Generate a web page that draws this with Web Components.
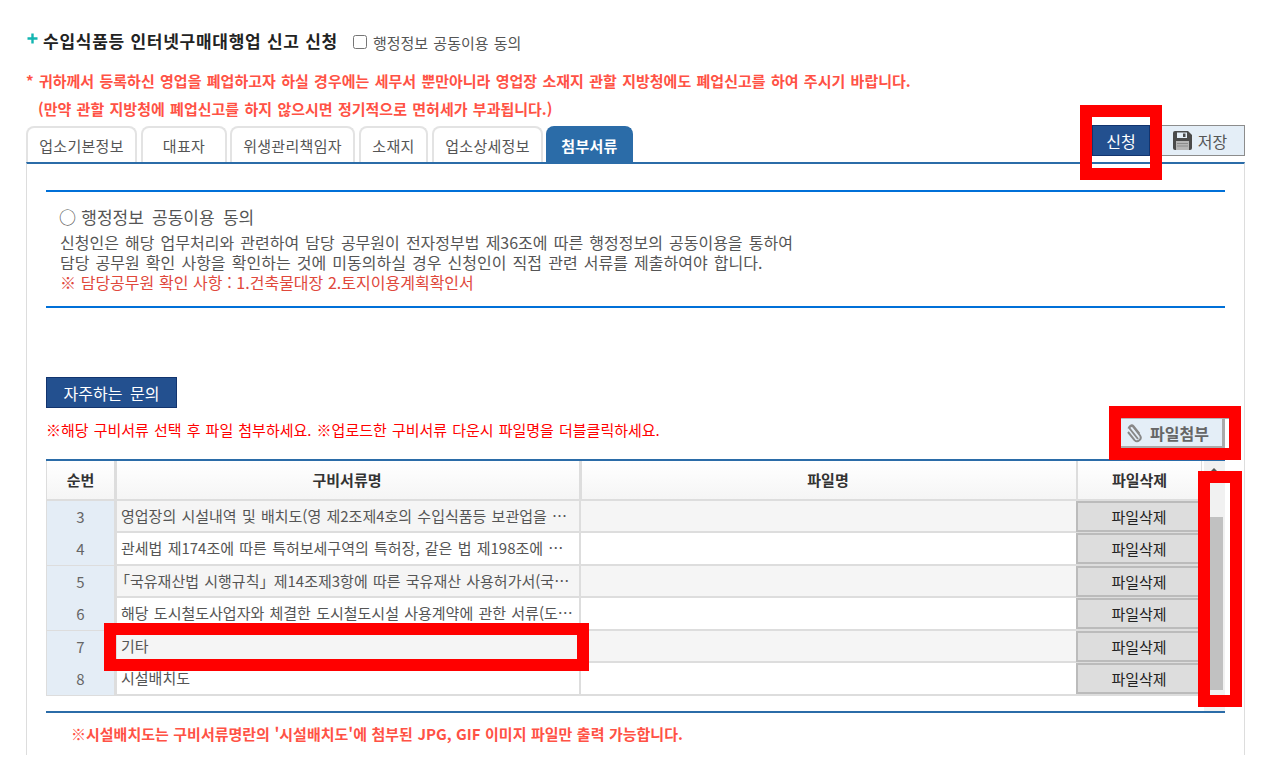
<!DOCTYPE html>
<html lang="ko"><head><meta charset="utf-8"><title>수입식품등 인터넷구매대행업 신고 신청</title>
<style>
html,body{margin:0;padding:0;height:757px;overflow:hidden;background:#fff}
body{font:15px "Noto Sans CJK KR","Noto Sans",sans-serif;color:#555}
</style></head><body>
<app-page>
  <page-header slot="head">수입식품등 인터넷구매대행업 신고 신청</page-header>
  <warn-line>* 귀하께서 등록하신 영업을 폐업하고자 하실 경우에는 세무서 뿐만아니라 영업장 소재지 관할 지방청에도 폐업신고를 하여 주시기 바랍니다.</warn-line>
  <warn-line second>(만약 관할 지방청에 폐업신고를 하지 않으시면 정기적으로 면허세가 부과됩니다.)</warn-line>
  <tab-bar></tab-bar>
  <doc-panel></doc-panel>
  <red-box style="left:1080px;top:105px;width:82px;height:75px"></red-box>
  <red-box style="left:1109px;top:406px;width:132px;height:54px"></red-box>
  <red-box style="left:1198px;top:471px;width:44px;height:236px"></red-box>
  <red-box style="left:104px;top:623px;width:485px;height:48px"></red-box>
</app-page>
<script>
function def(name, css, html, init){
  customElements.define(name, class extends HTMLElement{
    constructor(){super();const s=this.attachShadow({mode:'open'});s.innerHTML='<style>'+css+'</style>'+html;if(init)init(s,this);}
  });
}
const FONT='"Noto Sans CJK KR","Noto Sans",sans-serif';
def('app-page',`:host{display:block;position:relative;width:1272px;height:757px;overflow:hidden;box-sizing:border-box;padding:0 27px 0 26px;font-family:${FONT}}`,
 `<slot name="head"></slot><slot></slot>`);
def('page-header',`:host{display:flex;align-items:center;height:28px;margin-top:27px;margin-bottom:12px}
 .plus{width:11px;height:11px;margin-top:-5px;margin-left:1px;margin-right:5px;flex:none}
 .t{font-size:17px;font-weight:700;color:#222;line-height:28px;letter-spacing:.74px;margin-top:-1px}
 label{display:flex;align-items:center;margin-left:15px;font-size:15px;color:#555;margin-top:2px;word-spacing:1px}
 .cb{appearance:none;box-sizing:border-box;width:14px;height:14px;margin:0 6px 0 0;border:1.5px solid #767676;border-radius:2.5px;background:#fff}`,
 `<svg class="plus" viewBox="0 0 11 11"><path d="M5.5 .5v10M.5 5.5h10" stroke="#13b5b1" stroke-width="2.4" fill="none"/></svg><span class="t"><slot></slot></span><label><input class="cb" type="checkbox">행정정보 공동이용 동의</label>`);
def('warn-line',`:host{display:block;height:28px;line-height:28px;font-size:15px;font-weight:700;color:#ff5245;white-space:nowrap;word-spacing:1.15px}
 :host([second]){padding-left:12px;height:31px}`,`<slot></slot>`);
def('tab-item',`:host{display:flex;align-items:center;justify-content:center;box-sizing:border-box;height:36px;border:2px solid #e3e3e3;border-bottom:0;border-radius:8px 8px 0 0;background:#fff;font-size:15px;letter-spacing:.3px;color:#555;padding-top:1px}
 :host([active]){background:#2b6ca8;border-color:#2b6ca8;color:#fff;font-weight:700}`,`<slot></slot>`);
def('save-btn',`:host{display:flex;align-items:center;justify-content:center;box-sizing:border-box;height:31px;width:84px;border:1px solid #8c8c8c;background:#e4eef7;color:#555;font-size:16px;padding-right:6px}
 svg{width:19px;height:19px;margin-right:6px}`,
 `<svg viewBox="0 0 19 19"><path d="M0 2a2 2 0 0 1 2-2h13l4 4v13a2 2 0 0 1-2 2H2a2 2 0 0 1-2-2z" fill="#4a4a4a"/><rect x="4" y="1.5" width="10" height="5.5" fill="#e4eef7"/><rect x="10" y="2.5" width="2.5" height="3.5" fill="#4a4a4a"/><rect x="3" y="10" width="13" height="9" fill="#b5b5b5"/><path d="M4 12.500h11M4 15h11" stroke="#8a8a8a"/></svg><slot></slot>`);
def('apply-btn',`:host{display:flex;align-items:center;justify-content:center;box-sizing:border-box;height:31px;width:58px;background:#23508f;border:1px solid #12346e;color:#fff;font-size:16px;margin-right:11px}`,`<slot></slot>`);
def('tab-bar',`:host{display:flex;align-items:flex-start;gap:4px;height:36px}
 .r{margin-left:auto;display:flex;margin-top:-1px}`,
 `<tab-item style="width:111px">업소기본정보</tab-item><tab-item style="width:86px">대표자</tab-item><tab-item style="width:125px;margin-left:-1px">위생관리책임자</tab-item><tab-item style="width:69px">소재지</tab-item><tab-item style="width:111px">업소상세정보</tab-item><tab-item active style="width:87px;margin-left:-1px">첨부서류</tab-item>
 <div class="r"><apply-btn>신청</apply-btn><save-btn>저장</save-btn></div>`);
def('consent-box',`:host{display:block;box-sizing:border-box;height:118px;border-top:2px solid #0070d8;border-bottom:2px solid #0070d8;padding:13px 0 0 14px;font-size:16px;color:#555;word-spacing:1.65px}
 .h{font-size:17px;line-height:24px;margin-bottom:3px;word-spacing:3.5px}
 .c{font-size:17px;letter-spacing:-3px;margin-left:-1px}
 .l{line-height:20px;white-space:nowrap}.red{color:#e0483c;word-spacing:.2px}`,
 `<div class="h"><span class="c">○</span> 행정정보 공동이용 동의</div><div class="l">신청인은 해당 업무처리와 관련하여 담당 공무원이 전자정부법 제36조에 따른 행정정보의 공동이용을 통하여</div><div class="l">담당 공무원 확인 사항을 확인하는 것에 미동의하실 경우 신청인이 직접 관련 서류를 제출하여야 합니다.</div><div class="l red">※ 담당공무원 확인 사항 : 1.건축물대장 2.토지이용계획확인서</div>`);
def('faq-btn',`:host{display:flex;align-items:center;justify-content:center;box-sizing:border-box;width:131px;height:31px;background:#23508f;border:1px solid #12346e;color:#fff;font-size:16px;word-spacing:3px}`,`<slot></slot>`);
def('attach-btn',`:host{display:flex;box-sizing:border-box;height:30px}
 .b{display:flex;align-items:center;box-sizing:border-box;width:104px;height:30px;background:#e4eef7;border:1px solid #b5b5b5;border-right:2px solid #aaa;border-bottom:2px solid #aaa;color:#666;font-weight:700;font-size:16px;padding-left:4px}
 .s{width:5px;height:30px;border-left:1px solid #aaa;border-top:1px solid #aaa;box-sizing:border-box}
 svg{width:17px;height:21px;margin-right:8px}`,
 `<div class="b"><svg viewBox="0 0 17 21"><path d="M13 17 5 7a2.200 2.200 0 0 1 3.400-2.800l6 7.500" fill="none" stroke="#888" stroke-width="2"/><path d="M3.500 6.500a3 3 0 0 1 4.500-2l7 9a3.600 3.600 0 0 1-5.500 4.600L3 10" fill="none" stroke="#888" stroke-width="2"/></svg>파일첨부</div><div class="s"></div>`);
def('grid-row',`:host{display:grid;grid-template-columns:68px 465px 497px 126px;height:32.5px;box-sizing:border-box;border-bottom:2px solid #ddd;font-size:15px;color:#555;background:#fff}
 :host([alt]){background:#f5f5f5}
 .n{background:#e4edf6;text-align:center;border-left:1px solid #ddd;line-height:32px;color:#666;box-sizing:border-box}
 .d{border-left:3px solid #ddd;padding-left:4px;line-height:30px;white-space:nowrap;overflow:hidden;box-sizing:border-box;word-spacing:1.05px}
 .f{border-left:2px solid #ddd;box-sizing:border-box}
 .x{display:flex;align-items:center;justify-content:center;background:#ddd;border:2px solid #bbb;box-sizing:border-box;color:#222;height:31px}`,
 `<div class="n"></div><div class="d"></div><div class="f"></div><div class="x">파일삭제</div>`,
 (s,h)=>{queueMicrotask(()=>{s.querySelector('.n').textContent=h.getAttribute('num');const d=s.querySelector('.d');const t=h.getAttribute('text');if(t[0]==='「'){d.innerHTML='<span style="margin-left:-6px">「</span>'+t.slice(1,t.indexOf('」'))+'<span style="letter-spacing:-6px">」</span>'+t.slice(t.indexOf('」')+1);}else d.textContent=t;});});
def('grid-head',`:host{display:grid;grid-template-columns:68px 465px 497px 126px;height:39.500px;box-sizing:border-box;border-bottom:2px solid #ddd;background:linear-gradient(#fff,#f5f5f5);font-weight:700;font-size:15px;color:#333}
 div{display:flex;align-items:center;justify-content:center;box-sizing:border-box;border-left:3px solid #ddd}
 div:nth-of-type(1){border-left:1px solid #ddd}
 div:nth-of-type(2),div:nth-of-type(3){padding-right:2px}
 div:nth-of-type(4){border-right:1px solid #ddd;border-left-width:2px}`,
 `<div>순번</div><div>구비서류명</div><div>파일명</div><div>파일삭제</div>`);
def('scroll-rail',`:host{display:block;position:relative;width:21px;margin-left:2px;height:250px;background:#f1f1f1;box-sizing:border-box}
 .a{position:absolute;left:6px;top:7px;border:4px solid transparent;border-bottom:4px solid #555;border-top:0}
 .t{position:absolute;left:6px;width:13px;top:56px;height:173px;background:#c1c1c1}`,`<div class="a"></div><div class="t"></div>`);
def('file-table',`:host{display:flex;border-top:2px solid #2b6ca8;width:1179px}
 .m{width:1156px;height:234px}`,
 `<div class="m"><grid-head></grid-head>
 <grid-row alt num="3" text="영업장의 시설내역 및 배치도(영 제2조제4호의 수입식품등 보관업을 …"></grid-row>
 <grid-row num="4" text="관세법 제174조에 따른 특허보세구역의 특허장, 같은 법 제198조에 …"></grid-row>
 <grid-row alt num="5" text="「국유재산법 시행규칙」 제14조제3항에 따른 국유재산 사용허가서(국…"></grid-row>
 <grid-row num="6" text="해당 도시철도사업자와 체결한 도시철도시설 사용계약에 관한 서류(도…"></grid-row>
 <grid-row alt num="7" text="기타"></grid-row>
 <grid-row num="8" text="시설배치도"></grid-row></div><scroll-rail></scroll-rail>`);
def('doc-panel',`:host{display:block;box-sizing:border-box;width:1219px;height:593px;border-top:2px solid #2b6ca8;border-left:1px solid #ddd;border-right:1px solid #ddd;padding:26px 19px 0 19px}
 .msg{display:flex;justify-content:space-between;height:30px;margin-top:10px;margin-bottom:11px;margin-right:-4px;color:#f00;font-size:15px;line-height:24px;word-spacing:.9px;white-space:nowrap}
 faq-btn{margin-top:69px}
 .end{height:2px;background:#2b6ca8}
 .note{color:#ff5245;font-weight:700;font-size:15px;padding:10px 0 0 25px;line-height:21px;white-space:nowrap;word-spacing:.3px}`,
 `<consent-box></consent-box><faq-btn>자주하는 문의</faq-btn>
 <div class="msg"><span>※해당 구비서류 선택 후 파일 첨부하세요. ※업로드한 구비서류 다운시 파일명을 더블클릭하세요.</span><attach-btn></attach-btn></div>
 <file-table></file-table><div class="end"></div>
 <div class="note">※시설배치도는 구비서류명란의 '시설배치도'에 첨부된 JPG, GIF 이미지 파일만 출력 가능합니다.</div>`);
def('red-box',`:host{display:block;position:absolute;box-sizing:border-box;border:12px solid #f00}`,``);
</script>
</body></html>
